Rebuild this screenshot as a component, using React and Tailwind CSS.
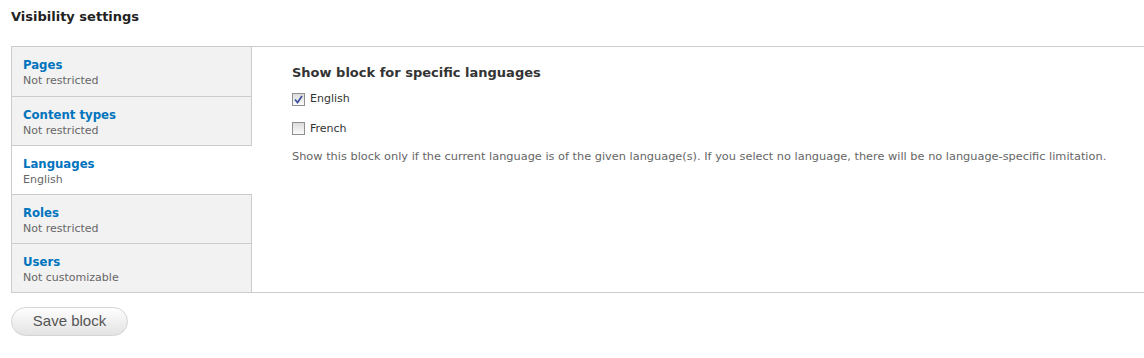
import { useState } from "react";

const tabs = [
  { title: "Pages", summary: "Not restricted" },
  { title: "Content types", summary: "Not restricted" },
  { title: "Languages", summary: "English" },
  { title: "Roles", summary: "Not restricted" },
  { title: "Users", summary: "Not customizable" },
];

function Checkbox({ checked, onChange, label }) {
  return (
    <label className="flex items-center gap-[5px] cursor-pointer text-[11px] text-[#333]">
      <span
        onClick={onChange}
        className="w-[13px] h-[13px] border border-[#8f8f8f] bg-gradient-to-b from-[#dcdcdc] to-[#fbfbfb] flex items-center justify-center"
      >
        {checked && (
          <svg width="9" height="9" viewBox="0 0 9 9">
            <path d="M1 4.5 L3.5 7.5 L8 1" fill="none" stroke="#3c4f9a" strokeWidth="1.7" />
          </svg>
        )}
      </span>
      {label}
    </label>
  );
}

export default function App() {
  const [active, setActive] = useState(2);
  const [langs, setLangs] = useState({ English: true, French: false });

  return (
    <div className="bg-white w-[1144px] h-[358px] overflow-hidden" style={{ fontFamily: '"DejaVu Sans", Verdana, sans-serif' }}>
      <h2 className="pl-[11px] pt-[9px] text-[13px] font-bold text-[#222] leading-[16px]">Visibility settings</h2>

      <div className="ml-[11px] mt-[21px] w-[1150px] flex border-t border-b border-[#ccc]">
        <ul className="w-[241px] shrink-0 border-l border-r border-[#ccc] bg-[#f2f2f2]">
          {tabs.map((t, i) => (
            <li
              key={t.title}
              onClick={() => setActive(i)}
              className={
                "h-[49px] px-[11px] pt-[10px] cursor-pointer " +
                (i > 0 ? "border-t border-[#ccc] " : "") +
                (i === active ? "bg-white -mr-px" : "")
              }
            >
              <div className="font-['DejaVu_Sans_Condensed',sans-serif] text-[13px] font-bold text-[#0074bd] leading-[16px]">
                {t.title}
              </div>
              <div className="text-[11px] text-[#666] leading-[16px]">{t.summary}</div>
            </li>
          ))}
        </ul>

        <div className="pl-[40px] pt-[18px]">
          <h3 className="text-[13px] font-bold text-[#333] leading-[16px]">Show block for specific languages</h3>
          <div className="mt-[10px] flex flex-col gap-[13px]">
            {Object.keys(langs).map((l) => (
              <Checkbox
                key={l}
                label={l}
                checked={langs[l]}
                onChange={() => setLangs({ ...langs, [l]: !langs[l] })}
              />
            ))}
          </div>
          <p className="mt-[11px] text-[11.33px] text-[#666]">
            Show this block only if the current language is of the given language(s). If you select no language, there will be no language-specific limitation.
          </p>
        </div>
      </div>

      <button
        className="ml-[11px] mt-[14px] w-[117px] h-[29px] rounded-full border border-[#d4d4d4] bg-gradient-to-b from-[#fefefe] to-[#e3e3e3] text-[15px] text-[#555]"
        style={{ fontFamily: '"Liberation Sans", Arial, sans-serif' }}
      >
        Save block
      </button>
    </div>
  );
}
